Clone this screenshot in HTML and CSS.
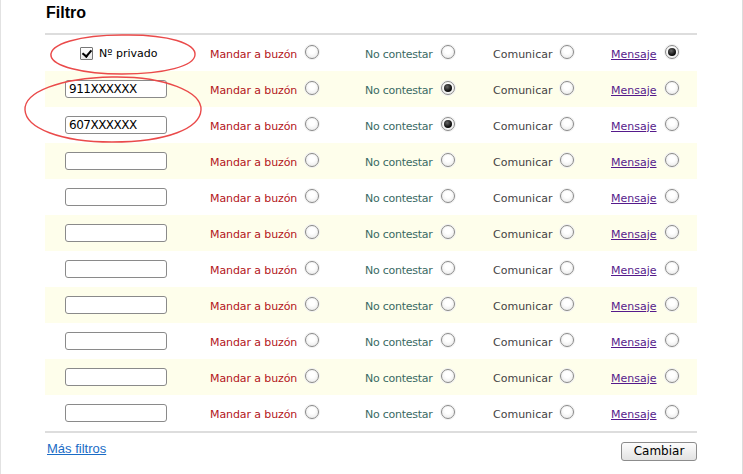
FILE: index.html
```html
<!DOCTYPE html>
<html lang="es">
<head>
<meta charset="utf-8">
<title>Filtro</title>
<link rel="stylesheet" href="styles.css">
</head>
<body>
<div class="page">
  <div class="content">
    <h2 class="title">Filtro</h2>
    <div class="rules">
      <div class="row">
        <div class="who private"><span class="check"></span><span class="private-label">Nº privado</span></div>
        <div class="opt buzon">Mandar a buzón <span class="radio"></span></div>
        <div class="opt nocont">No contestar <span class="radio"></span></div>
        <div class="opt comun">Comunicar <span class="radio"></span></div>
        <div class="opt msg"><a href="#">Mensaje</a> <span class="radio on"></span></div>
      </div>
      <div class="row alt">
        <div class="who"><span class="field">911XXXXXX</span></div>
        <div class="opt buzon">Mandar a buzón <span class="radio"></span></div>
        <div class="opt nocont">No contestar <span class="radio on"></span></div>
        <div class="opt comun">Comunicar <span class="radio"></span></div>
        <div class="opt msg"><a href="#">Mensaje</a> <span class="radio"></span></div>
      </div>
      <div class="row">
        <div class="who"><span class="field">607XXXXXX</span></div>
        <div class="opt buzon">Mandar a buzón <span class="radio"></span></div>
        <div class="opt nocont">No contestar <span class="radio on"></span></div>
        <div class="opt comun">Comunicar <span class="radio"></span></div>
        <div class="opt msg"><a href="#">Mensaje</a> <span class="radio"></span></div>
      </div>
      <div class="row alt">
        <div class="who"><span class="field"></span></div>
        <div class="opt buzon">Mandar a buzón <span class="radio"></span></div>
        <div class="opt nocont">No contestar <span class="radio"></span></div>
        <div class="opt comun">Comunicar <span class="radio"></span></div>
        <div class="opt msg"><a href="#">Mensaje</a> <span class="radio"></span></div>
      </div>
      <div class="row">
        <div class="who"><span class="field"></span></div>
        <div class="opt buzon">Mandar a buzón <span class="radio"></span></div>
        <div class="opt nocont">No contestar <span class="radio"></span></div>
        <div class="opt comun">Comunicar <span class="radio"></span></div>
        <div class="opt msg"><a href="#">Mensaje</a> <span class="radio"></span></div>
      </div>
      <div class="row alt">
        <div class="who"><span class="field"></span></div>
        <div class="opt buzon">Mandar a buzón <span class="radio"></span></div>
        <div class="opt nocont">No contestar <span class="radio"></span></div>
        <div class="opt comun">Comunicar <span class="radio"></span></div>
        <div class="opt msg"><a href="#">Mensaje</a> <span class="radio"></span></div>
      </div>
      <div class="row">
        <div class="who"><span class="field"></span></div>
        <div class="opt buzon">Mandar a buzón <span class="radio"></span></div>
        <div class="opt nocont">No contestar <span class="radio"></span></div>
        <div class="opt comun">Comunicar <span class="radio"></span></div>
        <div class="opt msg"><a href="#">Mensaje</a> <span class="radio"></span></div>
      </div>
      <div class="row alt">
        <div class="who"><span class="field"></span></div>
        <div class="opt buzon">Mandar a buzón <span class="radio"></span></div>
        <div class="opt nocont">No contestar <span class="radio"></span></div>
        <div class="opt comun">Comunicar <span class="radio"></span></div>
        <div class="opt msg"><a href="#">Mensaje</a> <span class="radio"></span></div>
      </div>
      <div class="row">
        <div class="who"><span class="field"></span></div>
        <div class="opt buzon">Mandar a buzón <span class="radio"></span></div>
        <div class="opt nocont">No contestar <span class="radio"></span></div>
        <div class="opt comun">Comunicar <span class="radio"></span></div>
        <div class="opt msg"><a href="#">Mensaje</a> <span class="radio"></span></div>
      </div>
      <div class="row alt">
        <div class="who"><span class="field"></span></div>
        <div class="opt buzon">Mandar a buzón <span class="radio"></span></div>
        <div class="opt nocont">No contestar <span class="radio"></span></div>
        <div class="opt comun">Comunicar <span class="radio"></span></div>
        <div class="opt msg"><a href="#">Mensaje</a> <span class="radio"></span></div>
      </div>
      <div class="row">
        <div class="who"><span class="field"></span></div>
        <div class="opt buzon">Mandar a buzón <span class="radio"></span></div>
        <div class="opt nocont">No contestar <span class="radio"></span></div>
        <div class="opt comun">Comunicar <span class="radio"></span></div>
        <div class="opt msg"><a href="#">Mensaje</a> <span class="radio"></span></div>
      </div>
    </div>
    <div class="footer">
      <a class="more" href="#">Más filtros</a>
      <span class="button">Cambiar</span>
    </div>
  </div>
  <svg class="marks" width="743" height="474" viewBox="0 0 743 474">
    <path d="M 51 56 C 49 44, 80 35, 122 35 C 170 34, 196 44, 195 55 C 194 66, 165 74, 122 74 C 82 74, 53 66, 51 56 Z" />
    <path d="M 25 110 C 24 92, 60 78, 112 77 C 165 76, 202 92, 201 110 C 200 128, 168 142, 112 142 C 60 142, 26 128, 25 110 Z" />
  </svg>
</div>
</body>
</html>
```
FILE: styles.css
```css
html, body {
  margin: 0;
  padding: 0;
  background: #fff;
}

.page {
  position: relative;
  width: 743px;
  height: 474px;
  box-sizing: border-box;
  border-left: 1px solid #e2e2e2;
  border-right: 1px solid #dcdcdc;
  font-family: "DejaVu Sans", Verdana, sans-serif;
  font-size: 11px;
  overflow: hidden;
}

.content {
  width: 652px;
  margin-left: 44px;
}

.title {
  margin: 0;
  padding-top: 4px;
  height: 29px;
  font-family: "Liberation Sans", Arial, sans-serif;
  font-size: 16px;
  font-weight: bold;
  color: #000;
  line-height: 18px;
  padding-left: 1px;
  box-sizing: content-box;
}

.rules {
  border-top: 2px solid #dddddd;
  border-bottom: 2px solid #dddddd;
}

.row {
  display: grid;
  grid-template-columns: 165px 155px 128px 118px 86px;
  height: 36px;
  align-items: center;
  padding-top: 2px;
  box-sizing: border-box;
}

.row.alt {
  background: #fefeeb;
}

.who {
  display: flex;
  align-items: center;
  padding-left: 20px;
  margin-top: -2px;
}

.who.private {
  padding-left: 35px;
  gap: 6px;
}

.check {
  position: relative;
  width: 11px;
  height: 11px;
  border: 1px solid #777;
  border-radius: 1px;
  background: linear-gradient(#fff, #e9e9e9);
  box-sizing: content-box;
}

.check::after {
  content: "";
  position: absolute;
  left: 3px;
  top: 0px;
  width: 4px;
  height: 7px;
  border-right: 2px solid #000;
  border-bottom: 2px solid #000;
  transform: rotate(40deg);
}

.private-label {
  color: #000;
  font-size: 11px;
}

.field {
  display: block;
  width: 97px;
  height: 16px;
  border: 1px solid #8a8a8a;
  border-radius: 3px;
  background: #fff;
  font-size: 12px;
  line-height: 16px;
  padding-left: 3px;
  box-sizing: content-box;
  color: #000;
  letter-spacing: -0.5px;
}

.opt {
  display: flex;
  align-items: center;
  gap: 8px;
  white-space: nowrap;
}

.buzon { color: #b3151b; letter-spacing: -0.1px; }
.nocont { color: #3a6a64; letter-spacing: -0.25px; }
.comun { color: #444; }
.msg a { color: #551a8b; text-decoration: underline; }

.radio {
  position: relative;
  display: inline-block;
  width: 12px;
  height: 12px;
  border: 1px solid #8a8a8a;
  border-radius: 50%;
  background: radial-gradient(circle at 50% 40%, #ffffff 30%, #e4e4e4 100%);
  box-shadow: 0 0 0 1px #f0f0f0;
  margin-top: -5px;
  letter-spacing: 0;
}

.radio.on::after {
  content: "";
  position: absolute;
  left: 2px;
  top: 2px;
  width: 8px;
  height: 8px;
  border-radius: 50%;
  background: radial-gradient(circle at 40% 35%, #666 0%, #111 60%, #000 100%);
}

.footer {
  display: flex;
  justify-content: space-between;
  align-items: flex-start;
  padding-top: 8px;
}

.more {
  font-family: "Liberation Sans", Arial, sans-serif;
  font-size: 13px;
  color: #1a6cc6;
  text-decoration: underline;
  margin-left: 2px;
  line-height: 16px;
}

.button {
  display: inline-block;
  width: 74px;
  height: 17px;
  margin-top: 1px;
  border: 1px solid #8c8c8c;
  border-radius: 3px;
  background: linear-gradient(#fdfdfd, #e2e2e2);
  text-align: center;
  font-size: 12px;
  line-height: 17px;
  color: #000;
}

.marks {
  position: absolute;
  left: -1px;
  top: 0;
  pointer-events: none;
}

.marks path {
  fill: none;
  stroke: #ea4a4a;
  stroke-width: 1.4;
}
```
